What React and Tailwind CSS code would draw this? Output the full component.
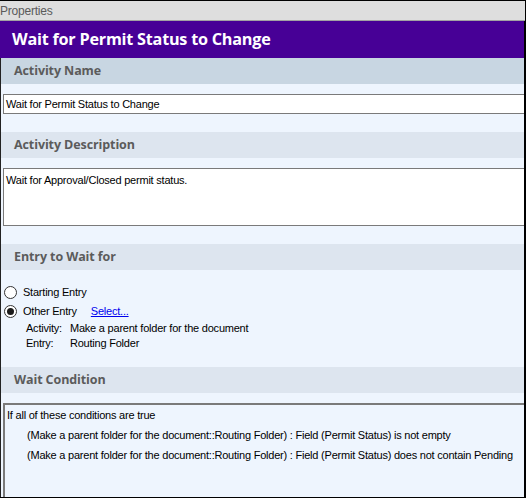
import React from 'react';

const body = { fontFamily: '"Liberation Sans", Arial, sans-serif', letterSpacing: '-0.22px' };
const head = { fontFamily: '"Open Sans", "Noto Sans", sans-serif' };

function SectionHeader({ children, active }) {
  return (
    <div
      className={`h-[26px] flex items-center pl-[13px] text-[12.5px] font-bold text-[#5b5b5b] tracking-[-0.1px] ${active ? 'bg-[#c8d6e2]' : 'bg-[#dde5ef]'}`}
      style={head}
    >
      {children}
    </div>
  );
}

function Radio({ checked, children }) {
  return (
    <div className="flex items-center h-[19px]">
      <span className="ml-[3px] w-[13px] h-[13px] rounded-full border border-[#333] bg-white flex items-center justify-center">
        {checked && <span className="w-[7px] h-[7px] rounded-full bg-[#1a1a1a]" />}
      </span>
      <span className="ml-[6px]">{children}</span>
    </div>
  );
}

export default function App() {
  return (
    <div className="w-[526px] h-[498px] overflow-hidden bg-black text-[11px] text-black" style={body}>
      <div className="mt-px h-[20px] bg-[#dedede] border-b border-[#a3a3a3] flex items-center text-[12px] text-[#5a5a5a] mr-[1px]">
        Properties
      </div>
      <div className="h-[476px] mr-[2px] bg-[#eef5fe] flex flex-col">
        <div className="h-[37px] bg-[#470096] flex items-center pl-[12px] text-[16.2px] font-bold text-white" style={head}>
          Wait for Permit Status to Change
        </div>
        <div className="flex-1 border-l border-[#222] flex flex-col">
          <SectionHeader active>Activity Name</SectionHeader>
          <div className="pt-[10px] pb-[18px] pl-[2px]">
            <div className="h-[20px] bg-white border border-[#7a7a7a] border-r-0 flex items-center pl-[2px]">
              Wait for Permit Status to Change
            </div>
          </div>
          <SectionHeader>Activity Description</SectionHeader>
          <div className="pt-[10px] pb-[18px] pl-[2px]">
            <div className="h-[58px] bg-white border border-[#7a7a7a] border-r-0 pl-[2px] pt-[3px]">
              Wait for Approval/Closed permit status.
            </div>
          </div>
          <SectionHeader>Entry to Wait for</SectionHeader>
          <div className="pt-[13px] h-[97px]">
            <Radio>Starting Entry</Radio>
            <Radio checked>
              <span>Other Entry</span>
              <span className="ml-[14px] text-[#0000ee] underline">Select...</span>
            </Radio>
            <div className="grid grid-cols-[44px_1fr] pl-[25px] leading-[15px]">
              <span>Activity:</span>
              <span>Make a parent folder for the document</span>
              <span>Entry:</span>
              <span>Routing Folder</span>
            </div>
          </div>
          <SectionHeader>Wait Condition</SectionHeader>
          <div className="pt-[10px] pl-[2px] flex-1 flex flex-col">
            <div className="flex-1 border-l-2 border-t-2 border-[#7a7a7a] pl-[2px] leading-[20px] bg-[#eef5fe] whitespace-nowrap">
              <div>If all of these conditions are true</div>
              <div className="pl-[20px]">(Make a parent folder for the document::Routing Folder) : Field (Permit Status) is not empty</div>
              <div className="pl-[20px]">(Make a parent folder for the document::Routing Folder) : Field (Permit Status) does not contain Pending</div>
            </div>
          </div>
        </div>
      </div>
    </div>
  );
}
